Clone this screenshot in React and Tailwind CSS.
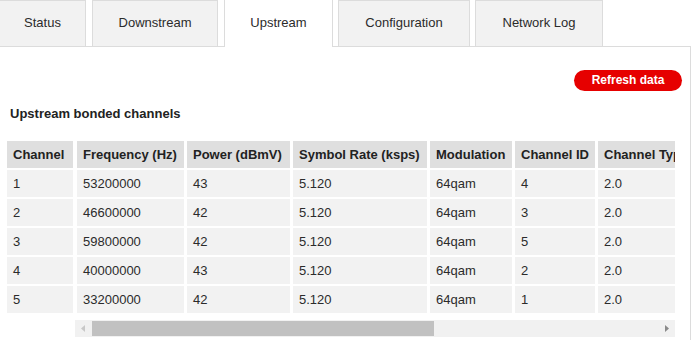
import React from 'react';

const tabs = [
  { label: 'Status', w: 'w-[87px]', m: 'mr-[6px]' },
  { label: 'Downstream', w: 'w-[126px]', m: 'mr-[6px]' },
  { label: 'Upstream', w: 'w-[109px]', m: 'mr-[5px]', active: true },
  { label: 'Configuration', w: 'w-[132px]', m: 'mr-[5px]' },
  { label: 'Network Log', w: 'w-[128px]', m: '' },
];

const columns = [
  { label: 'Frequency (Hz)', w: 'w-[107px]' },
  { label: 'Power (dBmV)', w: 'w-[103px]' },
  { label: 'Symbol Rate (ksps)', w: 'w-[134px]' },
  { label: 'Modulation', w: 'w-[82px]' },
  { label: 'Channel ID', w: 'w-[80px]' },
  { label: 'Channel Type', w: 'w-[110px]' },
];

const rows = [
  ['1', '53200000', '43', '5.120', '64qam', '4', '2.0'],
  ['2', '46600000', '42', '5.120', '64qam', '3', '2.0'],
  ['3', '59800000', '42', '5.120', '64qam', '5', '2.0'],
  ['4', '40000000', '43', '5.120', '64qam', '2', '2.0'],
  ['5', '33200000', '42', '5.120', '64qam', '1', '2.0'],
];

export default function App() {
  return (
    <div className="w-[695px] h-[340px] overflow-hidden bg-white font-['Liberation_Sans',Arial,sans-serif] text-[13px] text-[#2b2b2b]">
      <div className="-ml-px -mt-px w-[692px]">
        {/* Tabs */}
        <div className="flex items-end h-[47px]">
          {tabs.map((t) => (
            <div
              key={t.label}
              className={`${t.w} ${t.m} shrink-0 flex items-center justify-center border-t border-x border-[#dcdcdc] ${
                t.active ? 'h-[48px] bg-white relative z-10 -mb-px' : 'h-[46px] bg-[#f2f2f2]'
              }`}
            >
              <span className="-mt-px">{t.label}</span>
            </div>
          ))}
        </div>

        {/* Panel */}
        <div className="border-t border-r border-[#dcdcdc] h-[300px] pt-[23px] pl-[8px] pr-[8px]">
          <div className="flex justify-end">
            <button className="w-[108px] h-[21px] rounded-full bg-[#e60000] text-white font-bold text-[12px] leading-[21px]">
              Refresh data
            </button>
          </div>

          <div className="mt-[15px] pl-[3px] font-bold text-[13px] text-[#222] leading-[16px]">
            Upstream bonded channels
          </div>

          <div className="mt-[19px] flex">
            {/* fixed first column */}
            <div className="flex flex-col gap-[2px] w-[66px] shrink-0">
              <div className="h-[27px] bg-[#dfdfdf] px-[6px] flex items-center font-bold text-[#222]">Channel</div>
              {rows.map((r) => (
                <div key={r[0]} className="h-[27px] bg-[#f2f2f2] px-[6px] flex items-center">
                  {r[0]}
                </div>
              ))}
            </div>

            {/* scrolling part */}
            <div className="ml-[2px] w-[600px] shrink-0">
              <div className="overflow-hidden pl-[2px]">
                <div className="flex flex-col gap-[2px] w-max">
                  <div className="flex gap-[3px]">
                    {columns.map((c) => (
                      <div
                        key={c.label}
                        className={`${c.w} shrink-0 h-[27px] bg-[#dfdfdf] px-[6px] flex items-center font-bold text-[#222] whitespace-nowrap`}
                      >
                        {c.label}
                      </div>
                    ))}
                  </div>
                  {rows.map((r) => (
                    <div key={r[0]} className="flex gap-[3px]">
                      {r.slice(1).map((v, i) => (
                        <div
                          key={i}
                          className={`${columns[i].w} shrink-0 h-[27px] bg-[#f2f2f2] px-[6px] flex items-center`}
                        >
                          {v}
                        </div>
                      ))}
                    </div>
                  ))}
                </div>
              </div>

              {/* scrollbar */}
              <div className="mt-[7px] h-[17px] bg-[#f1f1f1] flex items-center">
                <div className="w-[17px] h-full flex items-center justify-center">
                  <svg width="5" height="7" viewBox="0 0 5 7">
                    <path d="M4 0 L0 3.5 L4 7 Z" fill="#c8c8c8" />
                  </svg>
                </div>
                <div className="flex-1 h-full flex items-center">
                  <div className="w-[342px] h-[15px] bg-[#c1c1c1]" />
                </div>
                <div className="w-[17px] h-full flex items-center justify-center">
                  <svg width="5" height="7" viewBox="0 0 5 7">
                    <path d="M1 0 L5 3.5 L1 7 Z" fill="#8a8a8a" />
                  </svg>
                </div>
              </div>
            </div>
          </div>
        </div>
      </div>
    </div>
  );
}
